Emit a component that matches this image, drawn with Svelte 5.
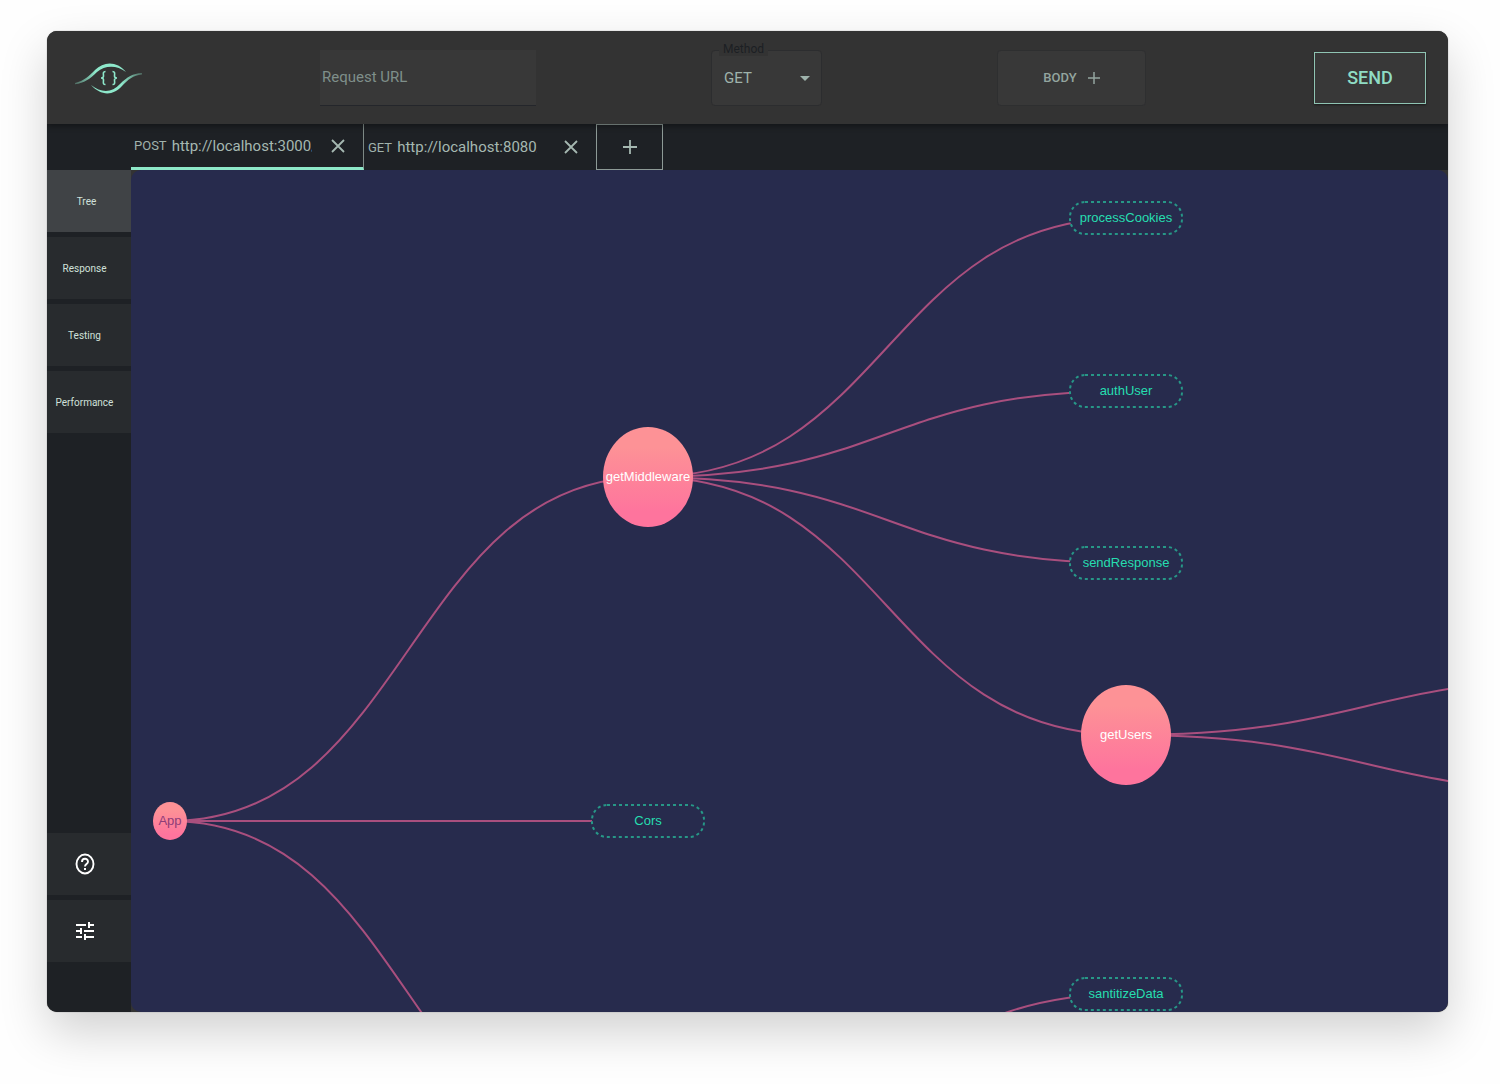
<script>
	let url = $state('');
	let method = $state('GET');
	let activeView = $state('Tree');
	let activeTab = $state(0);

	let tabs = $state([
		{ method: 'POST', url: 'http://localhost:3000/' },
		{ method: 'GET', url: 'http://localhost:8080/' }
	]);

	const methods = ['GET', 'POST', 'PUT', 'PATCH', 'DELETE'];
	const views = ['Tree', 'Response', 'Testing', 'Performance'];

	const nodes = {
		app: { name: 'App', x: 39, y: 651, kind: 'root' },
		middleware: { name: 'getMiddleware', x: 517, y: 307, kind: 'parent' },
		cookies: { name: 'processCookies', x: 995, y: 48, kind: 'leaf' },
		auth: { name: 'authUser', x: 995, y: 221, kind: 'leaf' },
		response: { name: 'sendResponse', x: 995, y: 393, kind: 'leaf' },
		users: { name: 'getUsers', x: 995, y: 565, kind: 'parent' },
		find: { name: 'findUser', x: 1473, y: 508, kind: 'leaf' },
		format: { name: 'formatUser', x: 1473, y: 622, kind: 'leaf' },
		cors: { name: 'Cors', x: 517, y: 651, kind: 'leaf' },
		post: { name: 'postData', x: 517, y: 998, kind: 'parent' },
		sanitize: { name: 'santitizeData', x: 995, y: 824, kind: 'leaf' }
	};

	const links = [
		['app', 'middleware'],
		['app', 'cors'],
		['app', 'post'],
		['middleware', 'cookies'],
		['middleware', 'auth'],
		['middleware', 'response'],
		['middleware', 'users'],
		['users', 'find'],
		['users', 'format'],
		['post', 'sanitize']
	];

	const visibleNodes = Object.values(nodes).filter((n) => n.x < 1400 && n.y < 900);

	function linkPath([from, to]) {
		const a = nodes[from];
		const b = nodes[to];
		const mid = (a.x + b.x) / 2;
		return `M${a.x},${a.y}C${mid},${a.y} ${mid},${b.y} ${b.x},${b.y}`;
	}

	function addTab() {
		tabs.push({ method: 'GET', url: 'http://localhost:3000/' });
	}

	function closeTab(index) {
		tabs.splice(index, 1);
	}
</script>

<div class="page">
	<div class="window">
		<header>
			<div class="logo">
				<svg width="68" height="34" viewBox="0 -1 68 34" role="img" aria-label="Logo">
					<defs>
						<linearGradient id="fade-left" x1="0" x2="1" y1="0" y2="0">
							<stop offset="0" stop-color="#8ee8cb" stop-opacity="0.3" />
							<stop offset="0.4" stop-color="#8ee8cb" />
						</linearGradient>
						<linearGradient id="fade-right" x1="0" x2="1" y1="0" y2="0">
							<stop offset="0.6" stop-color="#8ee8cb" />
							<stop offset="1" stop-color="#8ee8cb" stop-opacity="0.3" />
						</linearGradient>
					</defs>
					<path d="M0,21C9,19 14,14 20,8C29,-1 42,-1 51,10C42,3 30,3 22,10C15,17 9,21 0,22.300Z" fill="url(#fade-left)" />
					<path d="M67,12.500C58,13 53,18 47,24C38,34 26,34 16,23C26,31 37,31 45,22C52,15 58,11.500 67,11Z" fill="url(#fade-right)" />
					<g fill="none" stroke="#8ee8cb" stroke-width="1.600">
						<path d="M30.500,9.500C27.500,9.500 28.500,12 28.500,14C28.500,15.500 27.500,16 26,16C27.500,16 28.500,16.500 28.500,18C28.500,20 27.500,22.500 30.500,22.500" />
						<path d="M37.500,9.500C40.500,9.500 39.500,12 39.500,14C39.500,15.500 40.500,16 42,16C40.500,16 39.500,16.500 39.500,18C39.500,20 40.500,22.500 37.500,22.500" />
					</g>
				</svg>
			</div>
			<div>
				<input class="url" type="text" placeholder="Request URL" aria-label="Request URL" bind:value={url} />
			</div>
			<div>
				<div class="method">
					<label for="method">Method</label>
					<select id="method" bind:value={method}>
						{#each methods as m}
							<option>{m}</option>
						{/each}
					</select>
					<svg class="caret" width="10" height="5" viewBox="0 0 10 5"><path d="M0,0H10L5,5Z" fill="#9fb3ac" /></svg>
				</div>
			</div>
			<div>
				<button class="body-btn">
					BODY
					<svg width="12" height="12" viewBox="0 0 12 12"><path d="M6,0V12M0,6H12" stroke="#93a59f" stroke-width="1.500" /></svg>
				</button>
			</div>
			<button class="send">SEND</button>
		</header>

		<nav>
			{#each tabs as tab, i}
				<div class="tab" class:active={i === activeTab}>
					<span>{tab.method}</span>
					<input type="text" aria-label="Tab URL" bind:value={tab.url} onfocus={() => (activeTab = i)} />
					<button aria-label="Close tab" onclick={() => closeTab(i)}>
						<svg width="14" height="14" viewBox="0 0 14 14"><path d="M1,1L13,13M13,1L1,13" stroke="#a5b8b1" stroke-width="1.800" /></svg>
					</button>
				</div>
			{/each}
			<button class="add" aria-label="Add tab" onclick={addTab}>
				<svg width="14" height="14" viewBox="0 0 14 14"><path d="M7,0V14M0,7H14" stroke="#a5b8b1" stroke-width="1.800" /></svg>
			</button>
		</nav>

		<div class="content">
			<aside>
				{#each views as view}
					<button class:active={view === activeView} onclick={() => (activeView = view)}>{view}</button>
				{/each}
				<button class="help" aria-label="Help">
					<svg width="20" height="22" viewBox="0 0 20 22" fill="none" stroke="#fff">
						<ellipse cx="10" cy="11" rx="8.500" ry="9.500" stroke-width="1.900" />
						<path d="M7,9C7,4.800 13,4.800 13,8.700C13,11 10,11.200 10,13.600" stroke-width="1.900" />
						<path d="M10,15V17" stroke-width="2" />
					</svg>
				</button>
				<button aria-label="Settings">
					<svg width="18" height="20" viewBox="0 0 18 20" fill="none" stroke="#fff" stroke-width="2">
						<path d="M0,4H10M13,4H18M13,1V7" />
						<path d="M0,10H4M8,10H18M5,7V13" />
						<path d="M0,16H6M9,16H18M9,13V19" />
					</svg>
				</button>
			</aside>

			<main>
				<svg class="tree">
					<defs>
						<linearGradient id="pink" x1="0" x2="0" y1="0" y2="1">
							<stop offset="0.200" stop-color="#fd9296" />
							<stop offset="0.850" stop-color="#fe749d" />
						</linearGradient>
					</defs>
					{#each links as link}
						<path class="link" d={linkPath(link)} />
					{/each}
					{#each visibleNodes as node}
						<g class={node.kind} transform="translate({node.x}, {node.y})">
							{#if node.kind === 'root'}
								<ellipse rx="17" ry="19" />
							{:else if node.kind === 'parent'}
								<ellipse rx="45" ry="50" />
							{:else}
								<rect x="-56" y="-16" width="112" height="32" rx="15" />
							{/if}
							<text y="4">{node.name}</text>
						</g>
					{/each}
				</svg>
			</main>
		</div>
	</div>
</div>

<style>
	:global(body) {
		background: #fefefe;
	}

	.page {
		display: flex;
		flex-direction: column;
		box-sizing: border-box;
		min-height: 100vh;
		padding: 31px 52px 72px 47px;
	}

	.window {
		display: flex;
		flex: 1;
		flex-direction: column;
		border-radius: 10px;
		overflow: hidden;
		background: #333;
		font-family: Roboto, sans-serif;
		box-shadow: 0 20px 48px rgba(0, 0, 0, 0.18), 0 0 1px rgba(0, 0, 0, 0.6);
	}

	button,
	input,
	select {
		box-sizing: border-box;
		margin: 0;
		font-family: inherit;
	}

	button {
		display: flex;
		align-items: center;
		justify-content: center;
		cursor: pointer;
	}

	header {
		position: relative;
		z-index: 1;
		display: grid;
		grid-template-columns: 273fr 391fr 286fr 317fr auto;
		align-items: center;
		height: 93px;
		padding-right: 22px;
		background: #333;
		box-shadow: 0 2px 6px rgba(0, 0, 0, 0.4);
	}

	.logo {
		padding-left: 28px;
	}

	.logo svg {
		display: block;
	}

	.url {
		display: block;
		width: 216px;
		height: 56px;
		padding: 0 2px;
		border: 0;
		border-bottom: 1px solid #24262b;
		background: #383838;
		color: #9fb3ac;
		font-size: 15px;
	}

	.url::placeholder {
		color: #7f8f8a;
		opacity: 1;
	}

	.method {
		position: relative;
		width: 111px;
	}

	.method label {
		position: absolute;
		top: -8px;
		left: 8px;
		padding: 0 4px;
		background: #333;
		color: #1c1f23;
		font-size: 12px;
		line-height: 14px;
	}

	select {
		appearance: none;
		display: block;
		width: 100%;
		height: 56px;
		padding: 0 12px;
		border: 1px solid #2c2d2f;
		border-radius: 4px;
		background: #383838;
		color: #9fb3ac;
		font-size: 15px;
	}

	.caret {
		position: absolute;
		top: 26px;
		right: 12px;
		pointer-events: none;
	}

	.body-btn {
		gap: 11px;
		width: 149px;
		height: 56px;
		border: 1px solid #2e2f30;
		border-radius: 4px;
		background: #383838;
		color: #93a59f;
		font-size: 13px;
		font-weight: 500;
	}

	.send {
		width: 112px;
		height: 52px;
		border: 1px solid #8fc4b3;
		background: #383838;
		color: #8fdcc4;
		font-size: 18px;
		font-weight: 500;
		box-shadow: 0 1px 2px rgba(0, 0, 0, 0.5);
	}

	nav {
		display: flex;
		height: 46px;
		padding-left: 84px;
		background: #1e2125;
	}

	.tab {
		display: flex;
		align-items: center;
		gap: 5px;
		box-sizing: border-box;
		width: 232px;
		padding-left: 4px;
		border-bottom: 0 solid #8ee8c8;
		color: #a0b2ac;
		font-size: 13px;
	}

	.tab.active {
		width: 233px;
		padding-left: 3px;
		border-right: 1px solid #7d8985;
		border-bottom-width: 3px;
	}

	.tab input {
		width: 140px;
		padding: 0;
		border: 0;
		background: none;
		color: #a5b8b1;
		font-size: 15px;
	}

	.tab button {
		width: 14px;
		height: 28px;
		margin: 0 18px 0 auto;
		padding: 0;
		border: 0;
		background: none;
	}

	.add {
		width: 67px;
		padding: 0;
		border: 1px solid #8d9a96;
		background: none;
	}

	.content {
		display: flex;
		flex: 1;
	}

	aside {
		display: flex;
		flex-direction: column;
		gap: 5px;
		width: 84px;
		padding-bottom: 50px;
		box-sizing: border-box;
		background: #1e2125;
	}

	aside button {
		height: 62px;
		padding: 0 9px 0 0;
		border: 0;
		background: #282b2e;
		color: #d0e0da;
		font-size: 10px;
	}

	aside button.active {
		padding-right: 5px;
		background: #404346;
	}

	.help {
		margin-top: auto;
	}

	main {
		display: flex;
		flex: 1;
		min-width: 0;
		border-radius: 10px;
		overflow: hidden;
		background: #272b4d;
	}

	.tree {
		flex: 1;
		width: 100%;
		font-family: 'Liberation Sans', Arial, sans-serif;
		font-size: 13px;
		text-anchor: middle;
	}

	.link {
		fill: none;
		stroke: #a94f7e;
		stroke-width: 2;
	}

	main ellipse {
		fill: url(#pink);
	}

	.parent text {
		fill: #fff;
	}

	.root text {
		fill: #8e3c78;
	}

	rect {
		fill: #272b4d;
		stroke: #279787;
		stroke-width: 2;
		stroke-dasharray: 3 3;
	}

	.leaf text {
		fill: #26deb0;
	}
</style>
